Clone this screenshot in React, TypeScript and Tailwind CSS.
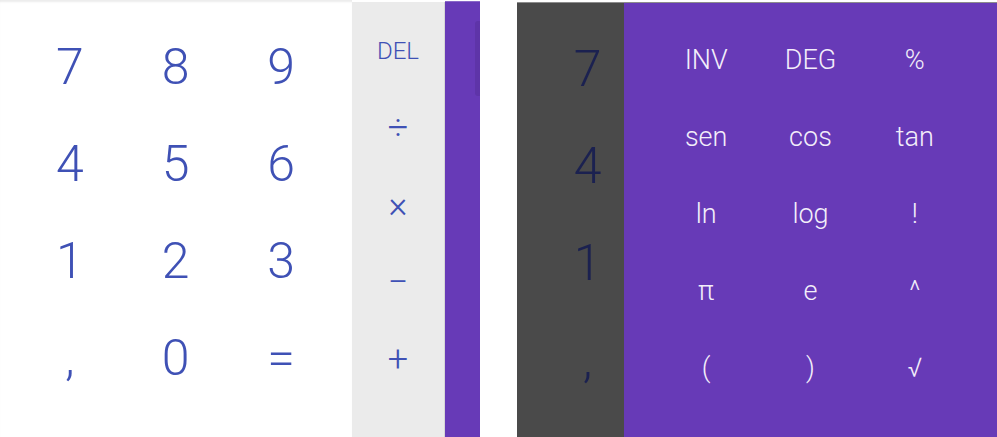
import React from "react";

const digits = ["7", "8", "9", "4", "5", "6", "1", "2", "3", ",", "0", "="];
const ops = ["÷", "×", "−", "+"];
const advanced = ["INV", "DEG", "%", "sen", "cos", "tan", "ln", "log", "!", "π", "e", "^", "(", ")", "√"];

const font = { fontFamily: "Roboto, 'Noto Sans', sans-serif" };

function DigitGrid({ className }: { className: string }) {
  return (
    <div className="grid grid-cols-3 pl-[17px] pr-[18px] pt-[18px]">
      {digits.map((d) => (
        <div key={d} className={`h-[97px] flex items-center justify-center text-[50px] font-light leading-none ${className}`}>
          {d}
        </div>
      ))}
    </div>
  );
}

function BasicPad() {
  return (
    <div className="flex h-[437px] w-[480px] shrink-0" style={font}>
      <div className="w-[352px] bg-white shadow-[inset_0_3px_2px_-1px_rgba(0,0,0,0.08)]">
        <DigitGrid className="text-[#3f51b5]" />
      </div>
      <div className="w-[92px] mt-[2px] bg-[#ebebeb] flex flex-col pt-[10px]">
        <div className="h-[77px] flex items-center justify-center text-[24px] font-light text-[#3f51b5] leading-none">
          DEL
        </div>
        {ops.map((o) => (
          <div key={o} className="h-[77px] flex items-center justify-center text-[36px] font-light text-[#3f51b5] leading-none">
            {o}
          </div>
        ))}
      </div>
      <div className="w-px mt-[2px] bg-[#d6d6d6]" />
      <div className="w-[35px] mt-[1px] bg-[#673ab7] border-t border-[#8a68c8] flex justify-end pt-[19px]">
        <div className="w-[5px] h-[75px] rounded-l-[3px] bg-[#5e34a8]" />
      </div>
    </div>
  );
}

function AdvancedPad() {
  return (
    <div className="flex h-[435px] w-[480px] mt-[2px] border-t border-[#8c8c8c] shrink-0" style={font}>
      <div className="w-[107px] bg-[#4a4a4a] overflow-hidden">
        <div className="w-[105px] ml-[18px] flex flex-col pt-[17px]">
          {["7", "4", "1", ","].map((d) => (
            <div key={d} className="h-[97px] flex items-center justify-center text-[50px] font-light leading-none text-[#1b2150]">
              {d}
            </div>
          ))}
        </div>
      </div>
      <div className="flex-1 bg-[#673ab7] px-[30px] pt-[19px] grid grid-cols-3 content-start">
        {advanced.map((a) => (
          <div key={a} className="h-[77px] flex items-center justify-center text-[27px] font-light leading-none text-[#f3eefa]">
            {a}
          </div>
        ))}
      </div>
    </div>
  );
}

export default function App() {
  return (
    <div className="flex w-[997px] h-[437px] bg-white overflow-hidden">
      <BasicPad />
      <div className="w-[37px] shrink-0" />
      <AdvancedPad />
    </div>
  );
}
